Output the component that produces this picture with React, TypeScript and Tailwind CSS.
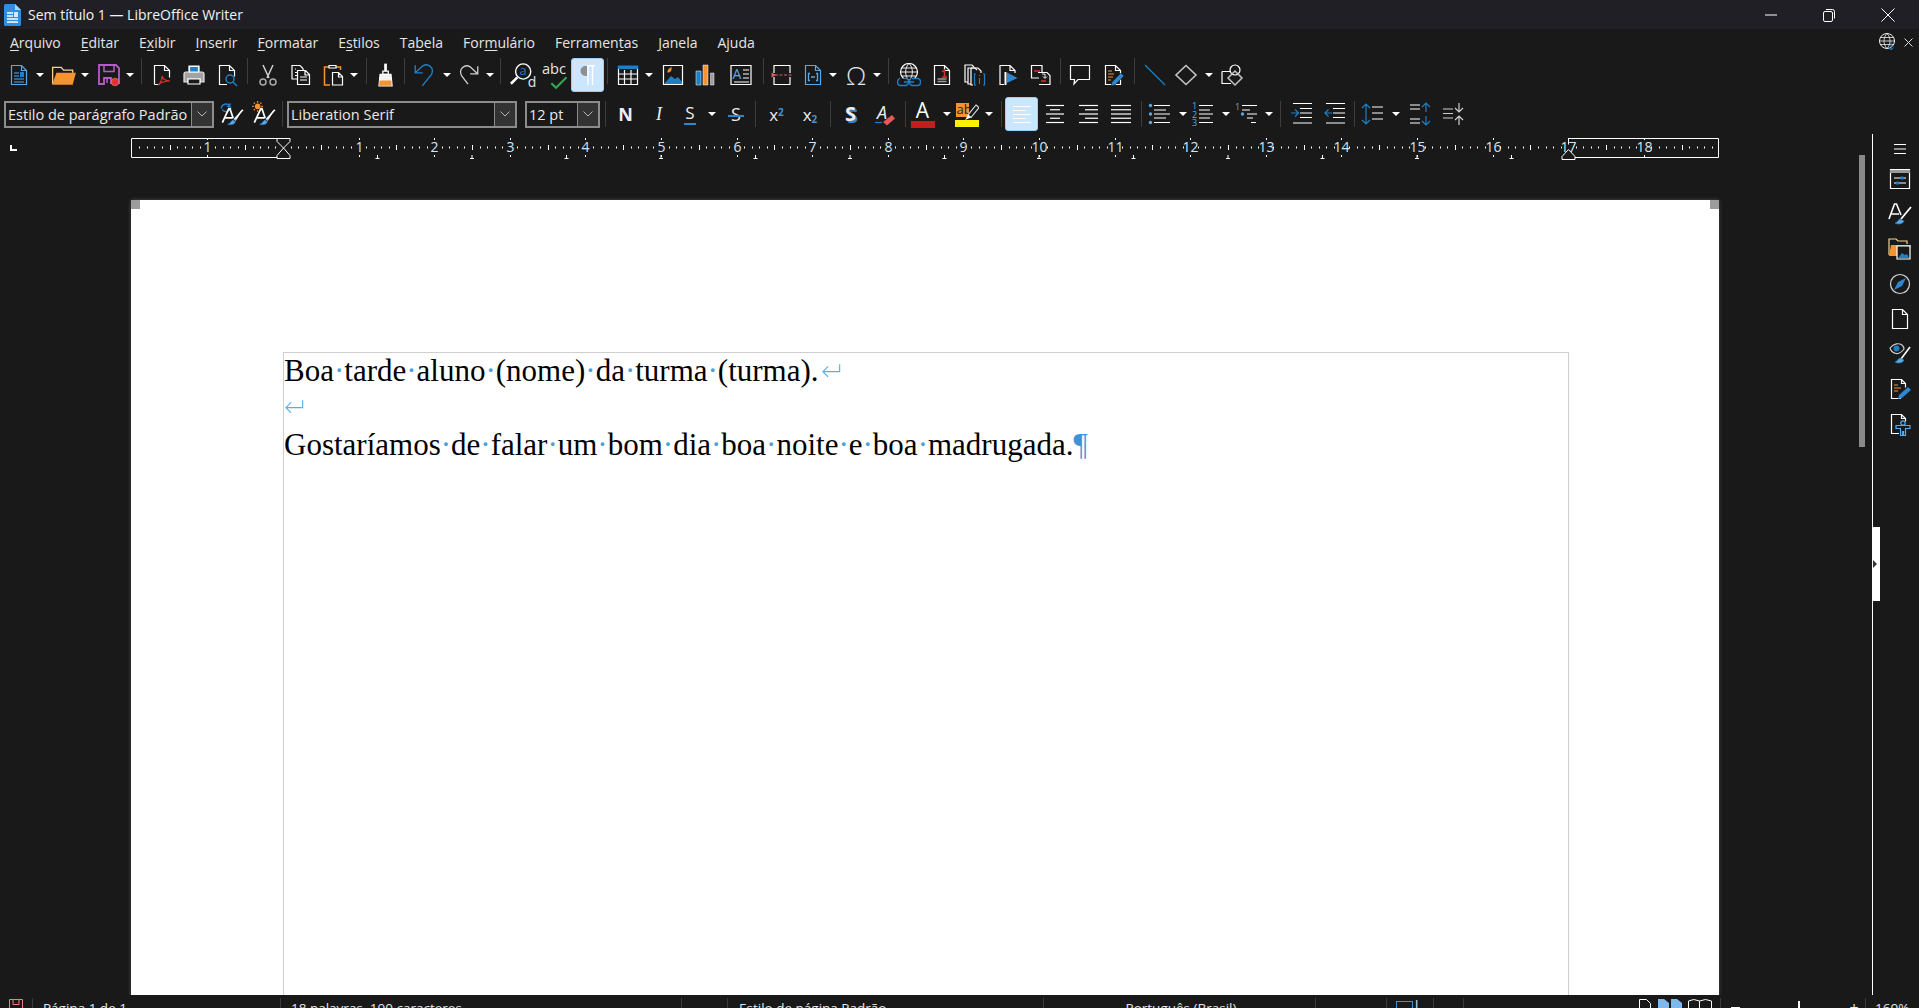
import type { ReactNode } from 'react';

const BLUE = '#1e7fc4';
const LBLUE = '#5aa9e6';
const ORANGE = '#f59331';
const RED = '#d9302c';

// base wrapper for the toolbar pictures
const Ic = ({ children, s = 24 }: { children: ReactNode; s?: number }) => (
    <svg width={s} height={s} viewBox="0 0 24 24" fill="none" stroke="#fff" strokeWidth="1.2">
        {children}
    </svg>
);

const Doc = ({ c = '#fff' }: { c?: string }) => <path d="M4.5 2.5h10l5 5v14h-15zM14.5 2.5v5h5" stroke={c} />;

const Btn = ({ children, className = 'w-[33px]' }: { children?: ReactNode; className?: string }) => (
    <div className={`flex h-[34px] shrink-0 items-center justify-center ${className}`}>{children}</div>
);

const Arrow = ({ className = 'w-[12px]' }: { className?: string }) => (
    <div className={`flex h-[34px] shrink-0 items-center justify-start pl-[1px] ${className}`}>
        <div className="h-0 w-0 border-x-[4px] border-t-[4px] border-x-transparent border-t-white" />
    </div>
);

const Sep = ({ className = 'w-[8px]' }: { className?: string }) => (
    <div className={`flex h-[26px] shrink-0 justify-center ${className}`}>
        <div className="h-full w-px bg-[#3d3d3d]" />
    </div>
);

const Combo = ({ label, className, arrow = 'w-[21px]' }: { label: string; className: string; arrow?: string }) => (
    <div className={`flex h-[27px] shrink-0 items-stretch border-2 border-[#8c8c8c] bg-[#191919] ${className}`}>
        <div className="flex-1 overflow-hidden whitespace-nowrap pl-[2px] text-[14.5px] leading-[23px] text-[#e8e8e8]">{label}</div>
        <div className={`flex items-center justify-center border-l border-[#8c8c8c] bg-[#333333] ${arrow}`}>
            <svg width="10" height="6" viewBox="0 0 10 6" fill="none" stroke="#b5b5b5">
                <path d="M.5.5 5 5 9.5.5" />
            </svg>
        </div>
    </div>
);

const Lines = ({ rows }: { rows: number[][] }) => (
    <Ic>
        {rows.map(([a, b], i) => (
            <path key={i} d={`M${a} ${3.5 + i * 4.25}H${b}`} />
        ))}
    </Ic>
);

const StyleA = ({ update }: { update: boolean }) => (
    <Ic s={26}>
        {update ? (
            <path d="M3 7a4.5 4.5 0 0 1 8-2.5M11 2v3H8M12 6a4.5 4.5 0 0 1-8 2" stroke={BLUE} strokeWidth="1.3" />
        ) : (
            <g stroke={ORANGE} strokeWidth="1.2">
                <circle cx="7" cy="5" r="2" fill={ORANGE} />
                <path d="M7 0v1.5M7 8.5V10M2 5h1.5M10.5 5H12M3.5 1.5l1 1M9.5 7.5l1 1M3.5 8.5l1-1M9.5 2.5l1-1" />
            </g>
        )}
        <path d="M4 20 10 7h1l3 9M6.5 15.5h7" strokeWidth="1.6" />
        <path d="M23 8 15 17" strokeWidth="1.4" />
        <path d="M14 17.5c-2 .5-2 3-5 4 3 1 7 0 7-2.5z" fill={LBLUE} stroke={BLUE} strokeWidth=".6" />
        <path d="M22 8.5 16 18" strokeWidth="1" />
    </Ic>
);

const Tabs = () => (
    <>
        {[0, 1, 2, 3, 4, 5, 6, 7, 8, 9, 10, 11, 12].map((i) => (
            <path key={i} d={`M${246.5 + i * 94.5} 17v3.5M${244.5 + i * 94.5} 20.5h4`} stroke="#fff" />
        ))}
    </>
);

function Ruler() {
    const zero = 152;
    const cm = 75.6;
    const ticks: ReactNode[] = [];
    for (let i = -19; i <= 189; i++) {
        const x = Math.round(zero + (i * cm) / 10) + 0.5;
        if (i === 0) continue;
        if (i % 10 === 0) {
            const n = Math.abs(i / 10);
            ticks.push(
                <g key={i}>
                    {i !== 170 && <path d={`M${x} 0v2M${x} 17v2`} stroke="#fff" />}
                    <text x={x} y="14" textAnchor="middle" fontSize="14" fill="#cfe6fa" stroke="none" fontFamily="'Open Sans', sans-serif">
                        {n}
                    </text>
                </g>,
            );
        } else {
            const long = Math.abs(i % 5) === 0;
            ticks.push(<path key={i} d={long ? `M${x} 7v5` : `M${x} 8.5v2`} stroke="#fff" />);
        }
    }
    return (
        <svg width="1590" height="22" viewBox="0 0 1590 22" fill="none" className="block">
            <path d="M146 .5H.5v19H146M1437 .5h150.5v19H1443" stroke="#fff" />
            {ticks}
            <Tabs />
            <path d="M146 .5h13v3L152.5 10 146 3.5zM146 20.5h13v-3L152.5 10 146 17.5z" stroke="#fff" fill="#191919" />
            <path d="M1431 21.5h13v-3l-6.5-7-6.5 7z" stroke="#fff" fill="#191919" />
            <path d="M1437.5 .5v6" stroke="#fff" />
        </svg>
    );
}

function TitleBar() {
    return (
        <div className="flex h-[29px] shrink-0 items-center bg-[#211f26] text-white">
            <svg width="20" height="24" viewBox="0 0 20 24" className="ml-[3px]">
                <path d="M1 2.5 2 1h10l6 6v15l-1 1H2l-1-1z" fill="#2f8fde" />
                <path d="M12 1v6h6z" fill="#a7d3f5" />
                <path d="M4 10h6M4 13h6M4 16h11M4 19h11" stroke="#fff" strokeWidth="1.3" />
                <path d="M11 9h4v5h-4z" fill="#d5ebfb" />
            </svg>
            <span className="ml-[5px] text-[14px] text-[#f2f2f2]">Sem título 1 — LibreOffice Writer</span>
            <div className="ml-auto flex items-center">
                <svg width="12" height="2" className="mr-[46px]">
                    <path d="M0 1h12" stroke="#fff" />
                </svg>
                <svg width="12" height="14" viewBox="0 0 12 14" fill="none" stroke="#fff" className="mr-[46px]">
                    <rect x=".5" y="3.5" width="9" height="10" rx="1.5" />
                    <path d="M3 1.5h6.5a2 2 0 0 1 2 2v7" />
                </svg>
                <svg width="14" height="14" fill="none" stroke="#fff" className="mr-[24px]">
                    <path d="M.5.5l13 13M13.5.5l-13 13" />
                </svg>
            </div>
        </div>
    );
}

const menu: [string, string, string][] = [
    ['', 'A', 'rquivo'],
    ['', 'E', 'ditar'],
    ['E', 'x', 'ibir'],
    ['', 'I', 'nserir'],
    ['', 'F', 'ormatar'],
    ['E', 's', 'tilos'],
    ['Ta', 'b', 'ela'],
    ['For', 'm', 'ulário'],
    ['Ferramen', 't', 'as'],
    ['', 'J', 'anela'],
    ['A', 'j', 'uda'],
];

function MenuBar() {
    return (
        <div className="flex h-[26px] shrink-0 items-center gap-[20px] pl-[10px] text-[14px] text-[#e6e6e6]">
            {menu.map(([a, u, b]) => (
                <span key={a + u + b}>
                    {a}
                    <span className="underline underline-offset-2">{u}</span>
                    {b}
                </span>
            ))}
            <div className="ml-auto flex items-center gap-[5px] pr-[6px]">
                <svg width="20" height="20" viewBox="0 0 20 20" fill="none" stroke="#eee" className="mr-[1px]">
                    <circle cx="9" cy="9" r="7.5" />
                    <path d="M1.5 9h15M2.5 5.5h13M2.5 12.5h13M9 1.5c-4 4-4 11 0 15M9 1.5c4 4 4 11 0 15" strokeWidth=".8" />
                    <path d="M13 10v8M10.5 15.5 13 18l2.5-2.5" stroke={BLUE} />
                </svg>
                <svg width="9" height="9" fill="none" stroke="#ddd">
                    <path d="M.5.5l8 8M8.5.5l-8 8" />
                </svg>
            </div>
        </div>
    );
}

function MainToolbar() {
    return (
        <div className="flex h-[39px] shrink-0 items-start pl-[2px] pt-[3px]">
            <Btn>
                <Ic>
                    <Doc c={LBLUE} />
                    <path d="M7 10h5M7 13h5M7 16h10M7 19h10" stroke={LBLUE} />
                    <path d="M13 9h4v5h-4z" fill={BLUE} stroke="none" />
                </Ic>
            </Btn>
            <Arrow />
            <Btn>
                <Ic s={26}>
                    <path d="M1.5 20V5h8l2 2.5h8.5V10" stroke="#f7d58c" />
                    <path d="M1 21 5 10h18l-3 11z" fill={ORANGE} stroke="none" />
                </Ic>
            </Btn>
            <Arrow />
            <Btn>
                <Ic>
                    <path d="M2 2h17l3 3v15h-8v-5H7v6H2z" stroke="#b45cc9" strokeWidth="1.8" />
                    <path d="M7 2.5v6h10v-6M10 15v5" stroke="#b45cc9" strokeWidth="1.5" />
                    <circle cx="18" cy="19" r="3.8" fill="#e03131" stroke="#ff9b9b" strokeWidth=".5" />
                </Ic>
            </Btn>
            <Arrow />
            <Sep />
            <Btn>
                <Ic>
                    <path d="M4.5 21.5v-19h10l5 5v7M14.5 2.5v5h5M4.5 21.5h5" />
                    <path d="M8 22c3-2 4-6 4-9 1 3 3 5 8 5-4 0-9 1-12 4z" stroke={RED} />
                </Ic>
            </Btn>
            <Btn className="w-[32px]">
                <Ic>
                    <path d="M7 9V3h10v6" />
                    <path d="M2 19V11q0-2 2-2h16q2 0 2 2v8h-4v-3H6v3z" fill="#a3a3a3" stroke="#e8e8e8" />
                    <path d="M7.5 9V3.5h9V9z" fill={BLUE} stroke="#fff" />
                    <path d="M6 16h12v5H6z" stroke="#fff" fill="#191919" />
                </Ic>
            </Btn>
            <Btn>
                <Ic>
                    <path d="M12 21.5H4.5v-19h10l5 5v6M14.5 2.5v5h5" />
                    <circle cx="15" cy="16" r="4" stroke={BLUE} strokeWidth="1.5" />
                    <path d="m18 19 4 4" stroke={BLUE} strokeWidth="1.5" />
                </Ic>
            </Btn>
            <Sep />
            <Btn>
                <Ic>
                    <path d="M7 2l6 13M17 2l-6 13" stroke="#d0d0d0" strokeWidth="1.5" />
                    <circle cx="7" cy="19" r="3" stroke="#a8a8a8" strokeWidth="1.5" />
                    <circle cx="17" cy="19" r="3" stroke="#a8a8a8" strokeWidth="1.5" />
                </Ic>
            </Btn>
            <Btn>
                <Ic>
                    <path d="M8 16H3V2.5h8l3 3v2M7 6H6M6 9.5h2M6 12.5h2" />
                    <path d="M8.5 7.5h8l4 4v10h-12zM16 7.5V12h4.5M11 14h7M11 17h7" />
                </Ic>
            </Btn>
            <Btn className="w-[31px]">
                <Ic>
                    <path d="M8 4H3.5v18H9M15 4h4.5v3" stroke={ORANGE} strokeWidth="1.5" />
                    <path d="M8 5V2.5h7V5z" fill="#191919" />
                    <path d="M11.5 9.500h6l4 4v8.500h-10zM17.5 9.500V14h4" />
                </Ic>
            </Btn>
            <Arrow className="w-[14px] pl-[2px]" />
            <Sep />
            <Btn className="w-[30px]">
                <Ic s={26}>
                    <path d="M12.5 1.5v7" strokeWidth="2.5" />
                    <path d="M10 8.5h5v3h-5z" />
                    <path d="M7.5 11.500h10l1 10.500H6.500z" fill="#f3f3f3" stroke="#fff" />
                    <path d="M7 17h11v5H6.500z" fill={ORANGE} stroke="none" />
                </Ic>
            </Btn>
            <Sep className="w-[9px]" />
            <Btn className="w-[32px]">
                <Ic s={26}>
                    <path d="M3 3v7h7" stroke={BLUE} strokeWidth="1.3" />
                    <path d="M3 10 10 3.500c5-3 11 2 8 8L9.500 22" stroke={BLUE} strokeWidth="1.3" />
                </Ic>
            </Btn>
            <Arrow className="w-[12px] pl-[2px]" />
            <Btn className="w-[30px]">
                <Ic s={26}>
                    <path d="M21 4v7h-7" stroke="#cfcfcf" />
                    <path d="M21 11 14 4.500c-5-3-11 2-8 8l6 8" stroke="#cfcfcf" />
                </Ic>
            </Btn>
            <Arrow className="w-[14px] pl-[3px]" />
            <Sep className="w-[7px]" />
            <Btn className="w-[36px]">
                <Ic s={28}>
                    <circle cx="13" cy="9" r="6.5" />
                    <path d="M8 14 2.500 19.500" strokeWidth="2.2" />
                    <text x="13" y="12" textAnchor="middle" fontSize="11" fill={BLUE} stroke="none" fontFamily="'Open Sans'">
                        a
                    </text>
                    <text x="17" y="22" fontSize="12" fill="#e5e5e5" stroke="none" fontFamily="'Open Sans'">
                        d
                    </text>
                </Ic>
            </Btn>
            <Btn className="w-[31px]">
                <Ic s={28}>
                    <text x="0" y="11" fontSize="12.5" fill="#e5e5e5" stroke="none" fontFamily="'Open Sans'">
                        abc
                    </text>
                    <path d="m8 19 4 4 9-9" stroke="#2fa84f" strokeWidth="1.8" />
                </Ic>
            </Btn>
            <Btn className="w-[33px] rounded-[3px] border border-[#9ecdf3] bg-[#cce6ff]">
                <svg width="16" height="20" viewBox="0 0 16 20" fill="none" stroke="#fff" strokeWidth="1.4">
                    <path d="M7 1H5.500a5 5 0 0 0 0 10H7z" fill="#8f8f8f" stroke="none" />
                    <path d="M8 .5V20M12.5 .5V20M7 .7h8" />
                </svg>
            </Btn>
            <Sep className="w-[7px]" />
            <Btn>
                <Ic>
                    <path d="M2.5 3.500h19v18h-19zM2.500 11h19M2.500 16h19M8.500 7v14.500M15 7v14.500" />
                    <path d="M2 2.500h20v3.500H2z" fill={BLUE} stroke="none" />
                </Ic>
            </Btn>
            <Arrow className="w-[13px] pl-[1px]" />
            <Btn className="w-[31px]">
                <Ic>
                    <path d="M2.500 2.500h19v19h-19z" />
                    <path d="m3 21 7-8 4 3 3-2 4 5v2z" fill={BLUE} stroke="none" />
                    <path d="M7 9c0-2 1-3 3-4 0 2-1 4-3 4z" fill={ORANGE} stroke={ORANGE} />
                </Ic>
            </Btn>
            <Btn className="w-[34px]">
                <Ic>
                    <path d="M3 8h5v14H3z" fill={BLUE} stroke="#fff" strokeWidth=".5" />
                    <path d="M10 2h5v20h-5z" fill={ORANGE} stroke="#fff" strokeWidth=".5" />
                    <path d="M17.500 10h3.500v12h-3.500z" fill="#9c9c9c" stroke="#fff" strokeWidth=".5" />
                </Ic>
            </Btn>
            <Btn className="w-[37px]">
                <Ic>
                    <path d="M2 2.500h20v19H2z" />
                    <path d="M14 7h6M14 11h6M14 15h6M5 19h15" strokeWidth="1" />
                    <text x="3.500" y="16" fontSize="14" fill={LBLUE} stroke="none" fontFamily="'Open Sans'">
                        A
                    </text>
                </Ic>
            </Btn>
            <Sep />
            <Btn className="w-[31px]">
                <Ic>
                    <path d="M3 10V2.500h16V10M3 14v7.500h16V14" />
                    <path d="M4 12h17" stroke="#e25f5f" strokeDasharray="3 1.500" />
                    <path d="M.5 9.500 5 12l-4.500 2.500z" fill="#e25f5f" stroke="none" />
                </Ic>
            </Btn>
            <Btn className="w-[30px]">
                <Ic>
                    <path d="M4.500 21.500v-19h10l5 5v14zM14.500 2.500v5h5" stroke={LBLUE} />
                    <path d="M9 10.500H7.500v7H9M15 10.500h1.500v7H15M10 14h4" stroke={LBLUE} strokeWidth="1.3" />
                </Ic>
            </Btn>
            <Arrow />
            <Btn className="w-[32px]">
                <span className="text-[26px] font-light leading-none text-[#e6e6e6]">Ω</span>
            </Btn>
            <Arrow />
            <Sep />
            <Btn>
                <Ic>
                    <circle cx="12" cy="9" r="8.500" />
                    <path d="M3.500 9h17M4.500 5h15M4.500 13h15M12 .5c-4.500 4-4.500 13 0 17M12 .5c4.500 4 4.500 13 0 17" strokeWidth=".9" />
                    <path d="M3 15.500h-.500a4 4 0 0 0 0 7H9a4 4 0 0 0 1-7H8M15 15.500h6.500a4 4 0 0 1 0 7H15a4 4 0 0 1-1-7M7 19h10" stroke={BLUE} strokeWidth="1.4" fill="#191919" />
                </Ic>
            </Btn>
            <Btn>
                <Ic>
                    <Doc />
                    <path d="M7.500 16h9M7.500 18.500h9" stroke="#9c9c9c" strokeWidth="1.4" />
                    <path d="M12 9l2.500-2v7M12 14h5" stroke={RED} strokeWidth="1.5" />
                </Ic>
            </Btn>
            <Btn>
                <Ic>
                    <path d="M5 19H2V2h7l2 2M8 21H5V5h7l2 2" />
                    <path d="M8 5h7l3 3v2M8 5v17h2" />
                    <path d="M13 11h-1.500v11H13M20 11h1.500v11H20" stroke={BLUE} />
                    <path d="M16.500 12v1M16.500 15v6" stroke={BLUE} />
                </Ic>
            </Btn>
            <Btn>
                <Ic>
                    <path d="M8 21.500H4V2.500h10l5 5V10M14 2.500v5h5" />
                    <path d="M9.500 9v13" strokeWidth="2" />
                    <path d="M11 9.500 21.500 15 11 20z" fill="#2f86d0" stroke="none" />
                </Ic>
            </Btn>
            <Btn>
                <Ic>
                    <path d="M10 15H2.500V2.500H13V9" />
                    <path d="M5 8h6" stroke={RED} strokeWidth="1.5" />
                    <path d="M9 9.500h9l3 3v9H10" />
                    <path d="M12 18h5" stroke={RED} strokeWidth="1.5" />
                    <path d="M13 11h3v4M14 13.500l2 2 2-2" strokeWidth=".9" />
                </Ic>
            </Btn>
            <Sep className="w-[6px]" />
            <Btn className="w-[33px]">
                <Ic>
                    <path d="M2.500 2.500h19v14H10L6 21l.5-4.500h-4z" />
                </Ic>
            </Btn>
            <Btn className="w-[34px]">
                <Ic>
                    <Doc />
                    <path d="M7 8h4M7 11h6M7 14h5M7 17h3" stroke={ORANGE} />
                    <path d="M10 23l1-4 9-9 3 3-9 9z" fill="#2f86d0" stroke="#191919" strokeWidth=".6" />
                </Ic>
            </Btn>
            <Sep className="w-[8px]" />
            <Btn>
                <Ic>
                    <path d="M2 2l20 20" stroke={BLUE} />
                </Ic>
            </Btn>
            <Btn className="w-[29px]">
                <Ic>
                    <path d="M12 2.500 22 12 12 21.500 2 12z" stroke="#c4c4c4" strokeWidth="1.6" />
                </Ic>
            </Btn>
            <Arrow className="w-[16px] pl-[5px]" />
            <Btn className="w-[32px]">
                <Ic>
                    <path d="M2 8.500h9M2 8.500v12h9" />
                    <circle cx="15" cy="7" r="5" />
                    <path d="m15 8 7 7-7 7-7-7z" stroke="#c4c4c4" strokeWidth="1.5" />
                </Ic>
            </Btn>
        </div>
    );
}

const Glyph = ({ children, className = '' }: { children: ReactNode; className?: string }) => (
    <span className={`text-[18px] leading-none text-[#eee] ${className}`}>{children}</span>
);

const align = {
    left: [[2, 21], [2, 15], [2, 21], [2, 15], [2, 21]],
    center: [[3, 21], [7, 17], [3, 21], [7, 17], [3, 21]],
    right: [[3, 22], [9, 22], [3, 22], [9, 22], [3, 22]],
    fill: [[2, 22], [2, 22], [2, 22], [2, 22], [2, 22]],
};

function FormatToolbar() {
    return (
        <div className="flex h-[40px] shrink-0 items-center pl-[4px]">
            <Combo label="Estilo de parágrafo Padrão" className="w-[210px]" />
            <Btn className="ml-[1px] w-[32px]">
                <StyleA update />
            </Btn>
            <Btn className="w-[31px]">
                <StyleA update={false} />
            </Btn>
            <Sep className="w-[9px]" />
            <Combo label="Liberation Serif" className="w-[230px]" />
            <div className="w-[8px] shrink-0" />
            <Combo label="12 pt" className="w-[75px]" />
            <Sep className="w-[10px]" />
            <Btn className="w-[31px]">
                <Glyph className="font-bold">N</Glyph>
            </Btn>
            <Btn className="w-[36px]">
                <span className="text-[18px] italic leading-none text-[#eee]" style={{ fontFamily: 'Liberation Serif' }}>
                    I
                </span>
            </Btn>
            <Btn className="w-[26px]">
                <span className="border-b-2 border-[#2f86d0] px-[1px] text-[17px] leading-[20px] text-[#eee]">S</span>
            </Btn>
            <Arrow className="w-[18px] pl-[5px]" />
            <Btn className="w-[30px]">
                <span className="relative text-[18px] leading-none text-[#eee]">
                    S
                    <span className="absolute left-[-3px] right-[-3px] top-[10px] h-[1.5px] bg-[#2f86d0]" />
                </span>
            </Btn>
            <Sep className="w-[9px]" />
            <Btn className="w-[33px]">
                <span className="text-[17px] leading-none text-[#eee]">
                    x<sup className="text-[10px] font-bold text-[#3d93d8]">2</sup>
                </span>
            </Btn>
            <Btn className="w-[34px]">
                <span className="text-[17px] leading-none text-[#eee]">
                    x<sub className="text-[10px] font-bold text-[#3d93d8]">2</sub>
                </span>
            </Btn>
            <Sep className="w-[7px]" />
            <Btn className="w-[33px]">
                <span className="relative text-[20px] font-bold leading-none text-[#eee]">
                    <span className="absolute left-[2px] top-[2px] text-[#2f86d0]">S</span>
                    <span className="relative">S</span>
                </span>
            </Btn>
            <Btn className="w-[34px]">
                <Ic>
                    <text x="5" y="17" fontSize="18" fontStyle="italic" fill="#eee" stroke="none" fontFamily="'Open Sans'">
                        A
                    </text>
                    <path d="M3 20.500h7" stroke={BLUE} />
                    <path d="m11 20 9-7 3 3.500-8 7z" fill="#e8575a" stroke="none" />
                </Ic>
            </Btn>
            <Sep className="w-[8px]" />
            <Btn className="w-[27px]">
                <div className="flex w-[24px] flex-col items-center">
                    <span className="text-[21px] leading-[19px] text-[#fff]">A</span>
                    <div className="mt-[1px] h-[7px] w-[24px] bg-[#c01f1f]" />
                </div>
            </Btn>
            <Arrow className="w-[19px] pl-[7px]" />
            <Btn className="w-[24px]">
                <Ic s={26}>
                    <path d="M1 1h13v14H1z" fill={ORANGE} stroke="none" />
                    <text x="1.500" y="12" fontSize="13" fill="#222" stroke="none" fontFamily="'Open Sans'">
                        ab
                    </text>
                    <path d="M21 3l3 2.500-8 10-3-2.500z" stroke="#ddd" />
                    <path d="m10 18 3-5 3 2.500z" fill="#fff" stroke="none" />
                    <path d="M0 18h24v8H0z" fill="#fff200" stroke="none" />
                </Ic>
            </Btn>
            <Arrow className="w-[18px] pl-[6px]" />
            <Sep className="w-[8px]" />
            <Btn className="h-[34px] w-[33px] rounded-[3px] border border-[#9ecdf3] bg-[#cce6ff]">
                <svg width="20" height="20" viewBox="0 0 20 20" fill="none" stroke="#fff" strokeWidth="1.2">
                    <path d="M1 2.500h18M1 6.500h13M1 10.500h18M1 14.500h13M1 18.500h18" />
                </svg>
            </Btn>
            <Btn>
                <Lines rows={align.center} />
            </Btn>
            <Btn>
                <Lines rows={align.right} />
            </Btn>
            <Btn>
                <Lines rows={align.fill} />
            </Btn>
            <Sep className="w-[9px]" />
            <Btn className="w-[27px]">
                <Ic>
                    <path d="M6 3.500h16M6 8h12M6 12h16M6 16h12M6 20.500h16" />
                    <g fill={LBLUE} stroke="none">
                        <circle cx="2.500" cy="3.500" r="1.7" />
                        <circle cx="2.500" cy="12" r="1.7" />
                        <circle cx="2.500" cy="20.500" r="1.7" />
                    </g>
                </Ic>
            </Btn>
            <Arrow className="w-[16px] pl-[6px]" />
            <Btn className="w-[28px]">
                <Ic>
                    <path d="M8 3.500h14M8 8h11M8 12h14M8 16h11M8 20.500h14" />
                    <g fontSize="9" fill={LBLUE} stroke="none" fontFamily="'Open Sans'">
                        <text x="1" y="7">1</text>
                        <text x="1" y="15.500">2</text>
                        <text x="1" y="24">3</text>
                    </g>
                </Ic>
            </Btn>
            <Arrow className="w-[16px] pl-[5px]" />
            <Btn className="w-[27px]">
                <Ic>
                    <path d="M7 3.500h15M7 8h8M12 12h10M12 16h6M16 20.500h5" />
                    <text x="0" y="8" fontSize="9" fill={LBLUE} stroke="none" fontFamily="'Open Sans'">
                        1
                    </text>
                    <circle cx="7.500" cy="12" r="1.7" fill={LBLUE} stroke="none" />
                </Ic>
            </Btn>
            <Arrow className="w-[16px] pl-[5px]" />
            <Sep className="w-[9px]" />
            <Btn>
                <Ic>
                    <path d="M3 1.500h19M10 6.500h12M10 11h12M10 15.500h12M3 21h19" />
                    <path d="M1 11h7M5 7.500 8.500 11 5 14.500" stroke={BLUE} />
                </Ic>
            </Btn>
            <Btn>
                <Ic>
                    <path d="M3 1.500h19M10 6.500h12M10 11h12M10 15.500h12M3 21h19" />
                    <path d="M9 11H2M5.500 7.500 2 11l3.500 3.500" stroke={BLUE} />
                </Ic>
            </Btn>
            <Sep className="w-[7px]" />
            <Btn className="w-[28px]">
                <Ic>
                    <path d="M12 5h11M12 11h11M12 17h11" />
                    <path d="M6 2v20M2 6l4-4 4 4M2 18l4 4 4-4" stroke={BLUE} />
                </Ic>
            </Btn>
            <Arrow className="w-[18px] pl-[6px]" />
            <Btn className="w-[32px]">
                <Ic>
                    <path d="M2 3h10M2 7h10M2 17h10M2 21h10" />
                    <path d="M18 1v9M14 5l4-4 4 4M18 14v9M14 19l4 4 4-4" stroke={BLUE} />
                </Ic>
            </Btn>
            <Btn>
                <Ic>
                    <path d="M2 7h10M2 11.500h10M2 16h10" stroke="#cfcfcf" />
                    <path d="M18 1v9M14 6l4 4 4-4M18 14v9M14 18l4-4 4 4" stroke="#cfcfcf" />
                </Ic>
            </Btn>
        </div>
    );
}

function Sidebar() {
    return (
        <div className="relative flex flex-1 flex-col items-center border-l border-white pl-[8px] pt-[9px]">
            <div className="absolute left-0 top-[393px] flex h-[74px] w-[7px] items-center bg-white">
                <div className="h-0 w-0 border-y-[4px] border-l-[4px] border-y-transparent border-l-[#333]" />
            </div>
            <svg width="14" height="12" fill="none" stroke="#fff">
                <path d="M1 1.500h12M1 6h12M1 10.500h12" />
            </svg>
            <div className="mt-[12px] flex flex-col gap-[11px]">
                <Ic>
                    <path d="M2.500 2.500h19v19h-19z" />
                    <path d="M2 3h20v3H2z" fill="#9a9a9a" stroke="none" />
                    <path d="M6 11h12M6 16h12" />
                    <circle cx="14" cy="11" r="1.8" fill={BLUE} stroke="none" />
                    <circle cx="9.500" cy="16" r="1.8" fill={BLUE} stroke="none" />
                </Ic>
                <Ic>
                    <path d="M1 17 6.500 2h2L13 13M3 12h8" strokeWidth="1.6" />
                    <path d="m23 5-10 12" strokeWidth="1.8" />
                    <path d="M12 17c-2 .5-1.500 3-5 4 3 2 8 1 9-2z" fill={LBLUE} stroke={BLUE} strokeWidth=".6" />
                </Ic>
                <Ic>
                    <path d="M1 18V2h7l2 2h9v3" stroke="#f7d58c" />
                    <path d="M1 19 3 8h20l-3 11z" fill={ORANGE} stroke="none" />
                    <path d="M9 9h13v13H9z" fill="#191919" stroke="#fff" />
                    <path d="m10 21 4-5 3 2 2-1 2 4z" fill={BLUE} stroke="none" />
                </Ic>
                <Ic>
                    <circle cx="12" cy="12" r="9.500" stroke="#d8d8d8" />
                    <path d="M18 6 14 14 6 18 10 10z" fill="#2f86d0" stroke="none" />
                </Ic>
                <Ic>
                    <path d="M4.500 2.500h10l5 5v14h-15zM14.500 2.500v5h5" />
                </Ic>
                <Ic>
                    <path d="M2 6c4-5 9-5 12-3 1 1 2 2 2 4-3 4-5 5-8 4.500C5 11 3 9 2 6z" stroke="#cfcfcf" />
                    <circle cx="8.500" cy="6.500" r="3" fill={BLUE} stroke="none" />
                    <path d="m22 5-9 12" strokeWidth="1.6" />
                    <path d="M12 16c-2 .5-2 3-5 4 3 2 8 1 9-2z" fill={LBLUE} stroke={BLUE} strokeWidth=".6" />
                </Ic>
                <Ic>
                    <path d="M13 21.500H3.500v-19h10l4 4v4M13.500 2.500v4h4" />
                    <path d="M6 8h4M6 11h7M6 14h4" stroke={ORANGE} />
                    <path d="M10 22l1-4 9-8 3 3-9 8z" fill="#2f86d0" stroke="none" />
                </Ic>
                <Ic>
                    <path d="M11 21.500H3.500v-19h10l4 4v3M13.500 2.500v4h4" />
                    <circle cx="15" cy="11" r="2.2" stroke={LBLUE} />
                    <path d="M8 13.500h14v3h-4.500v7h-2v-4h-1v4h-2v-7H8z" stroke={LBLUE} fill="#191919" />
                </Ic>
            </div>
        </div>
    );
}

const Space = () => <span className="text-[#4a9fe0]">·</span>;

const Words = ({ text }: { text: string }) => (
    <>
        {text.split(' ').map((w, i) => (
            <span key={i}>
                {i > 0 && <Space />}
                {w}
            </span>
        ))}
    </>
);

const Break = ({ className }: { className: string }) => (
    <svg width="20" height="15" viewBox="0 0 17 13" fill="none" stroke="#5aaee8" strokeWidth="1" className={`inline-block ${className}`}>
        <path d="M16 1v6.500H1.500M6 3 1.500 7.500 6 12" />
    </svg>
);

function StatusBar() {
    const cell = 'h-full border-l border-[#3a3a3a]';
    return (
        <div className="relative flex h-[24px] shrink-0 items-start bg-[#191919] pt-[3px] text-[13.5px] leading-[20px] text-[#e6e6e6]">
            <div className="flex w-[32px] justify-center pt-[1px]">
                <svg width="14" height="14" fill="none" stroke="#f08080">
                    <path d="M.5.500h13v13H.5zM4 .5v5h6v-5" />
                </svg>
            </div>
            <div className={`w-[248px] pl-[10px] ${cell}`}>Página 1 de 1</div>
            <div className={`w-[401px] pl-[10px] ${cell}`}>18 palavras, 100 caracteres</div>
            <div className={`w-[46px] ${cell}`} />
            <div className={`w-[316px] pl-[11px] ${cell}`}>Estilo de página Padrão</div>
            <div className={`w-[272px] text-center ${cell}`}>
                <span className="ml-[3px]">Português (Brasil)</span>
            </div>
            <div className={`w-[71px] ${cell}`} />
            <div className={`flex w-[47px] gap-[2px] pl-[9px] ${cell}`}>
                <div className="mt-[3px] h-[12px] w-[17px] border border-[#3d93d8]" />
                <span className="text-[12px] leading-[14px]">I</span>
            </div>
            <div className={`w-[30px] ${cell}`} />
            <div className={`flex w-[257px] justify-end gap-[5px] pr-[8px] pt-[1px] ${cell}`}>
                <svg width="14" height="14" fill="none" stroke="#fff">
                    <path d="M1.500 14V.5h7l4 4V14" />
                </svg>
                <svg width="26" height="14" fill="#7cb9ee" stroke="none">
                    <path d="M1 14V0h6l5 4v10zM14 14V0h6l5 4v10z" />
                </svg>
                <svg width="24" height="14" fill="none" stroke="#fff">
                    <path d="M.5 14V2q5-3 11 0q6-3 12 0v12M11.500 2v12" />
                </svg>
            </div>
            <div className={`flex w-[199px] items-start pl-[10px] ${cell}`}>
                <div className="mt-[9px] h-px w-[9px] shrink-0 bg-white" />
                <div className="ml-[58px] mt-[3px] h-[10px] w-[2px] shrink-0 bg-white" />
                <div className="ml-[49px] mt-[4px] w-[10px] shrink-0 text-center text-[16px] leading-[12px]">+</div>
                <div className="ml-[6px] shrink-0 border-l border-[#3a3a3a] pl-[9px]">160%</div>
            </div>
        </div>
    );
}

export default function App() {
    return (
        <div className="flex h-screen flex-col overflow-hidden bg-[#191919]" style={{ fontFamily: "'Open Sans', sans-serif" }}>
            <TitleBar />
            <MenuBar />
            <MainToolbar />
            <FormatToolbar />
            <div className="flex h-[861px] shrink-0 overflow-hidden">
                <div className="flex w-[1859px] flex-col">
                    <div className="flex pt-[4px]">
                        <div className="ml-[10px] mt-[7px] h-[6px] w-[7px] border-b-2 border-l-2 border-white" />
                        <div className="ml-[114px]">
                            <Ruler />
                        </div>
                    </div>
                    <div className="relative ml-[131px] mt-[40px] h-[800px] w-[1588px] bg-white pl-[152px] pr-[150px] pt-[152px] shadow-[0_0_4px_#4a4a4a]">
                        <div className="absolute left-0 top-0 h-[9px] w-[9px] bg-[#9c9c9c]" />
                        <div className="absolute right-0 top-0 h-[9px] w-[9px] bg-[#9c9c9c]" />
                        <div
                            className="h-[800px] border-l border-r border-t border-[#cfcfcf] text-[31px] leading-[36.8px] text-black"
                            style={{ fontFamily: "'Liberation Serif', serif" }}
                        >
                            <div className="whitespace-nowrap">
                                <Words text="Boa tarde aluno (nome) da turma (turma)." />
                                <Break className="ml-[2px] align-[3px]" />
                            </div>
                            <div className="flex h-[36.8px] items-center">
                                <Break className="mt-[-3px]" />
                            </div>
                            <div className="whitespace-nowrap">
                                <Words text="Gostaríamos de falar um bom dia boa noite e boa madrugada." />
                                <span className="text-[#3d93d8]">¶</span>
                            </div>
                        </div>
                    </div>
                </div>
                <div className="w-[13px] pt-[21px]">
                    <div className="h-[292px] w-[6px] bg-[#8a8a8a]" />
                </div>
                <Sidebar />
            </div>
            <StatusBar />
        </div>
    );
}
